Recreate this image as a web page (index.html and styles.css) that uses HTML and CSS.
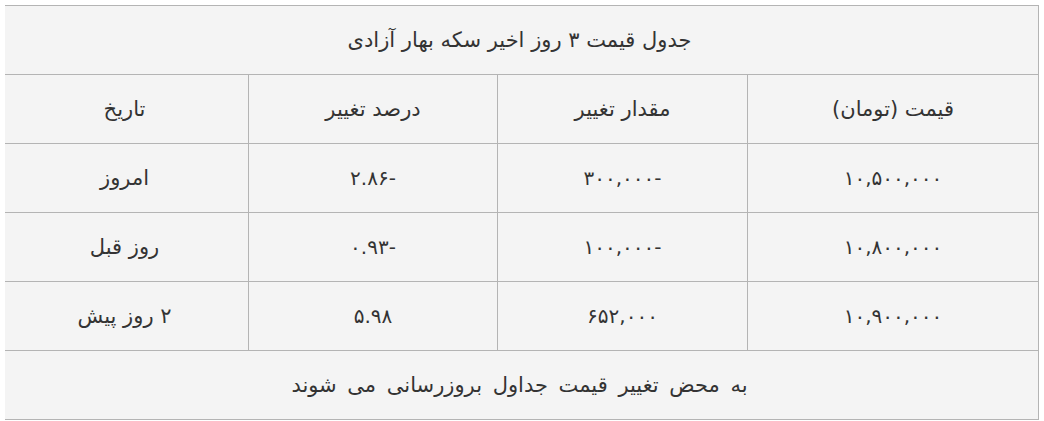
FILE: index.html
```html
<!DOCTYPE html>
<html lang="fa" dir="rtl">
<head>
<meta charset="utf-8">
<link rel="stylesheet" href="styles.css">
</head>
<body>
<table class="price-table">
  <colgroup>
    <col class="c1"><col class="c2"><col class="c3"><col class="c4">
  </colgroup>
  <tr><td colspan="4" class="title">جدول قیمت ۳ روز اخیر سکه بهار آزادی</td></tr>
  <tr><td>قیمت (تومان)</td><td>مقدار تغییر</td><td>درصد تغییر</td><td>تاریخ</td></tr>
  <tr><td class="num">۱۰,۵۰۰,۰۰۰</td><td class="num">-۳۰۰,۰۰۰</td><td class="num">-۲.۸۶</td><td>امروز</td></tr>
  <tr><td class="num">۱۰,۸۰۰,۰۰۰</td><td class="num">-۱۰۰,۰۰۰</td><td class="num">-۰.۹۳</td><td>روز قبل</td></tr>
  <tr><td class="num">۱۰,۹۰۰,۰۰۰</td><td class="num">۶۵۲,۰۰۰</td><td class="num">۵.۹۸</td><td>۲ روز پیش</td></tr>
  <tr><td colspan="4" class="footer">به محض تغییر قیمت جداول بروزرسانی می شوند</td></tr>
</table>
</body>
</html>
```
FILE: styles.css
```css
html, body { background: #ffffff; }
body {
  margin: 5px;
  font-family: "DejaVu Sans", "Noto Sans", sans-serif;
  color: #333333;
}
.price-table {
  width: 1038px;
  border-collapse: collapse;
  table-layout: fixed;
  background: #f4f4f4;
}
.c1 { width: 291px; }
.c2 { width: 250px; }
.c3 { width: 249px; }
.c4 { width: 248px; }
.price-table td {
  border: 1px solid #b4b4b4;
  height: 68px;
  padding: 0;
  text-align: center;
  vertical-align: middle;
  font-size: 21px;
  line-height: 26px;
}
.price-table td.num { font-size: 20px; }
.price-table td.footer { word-spacing: 4px; }
```
